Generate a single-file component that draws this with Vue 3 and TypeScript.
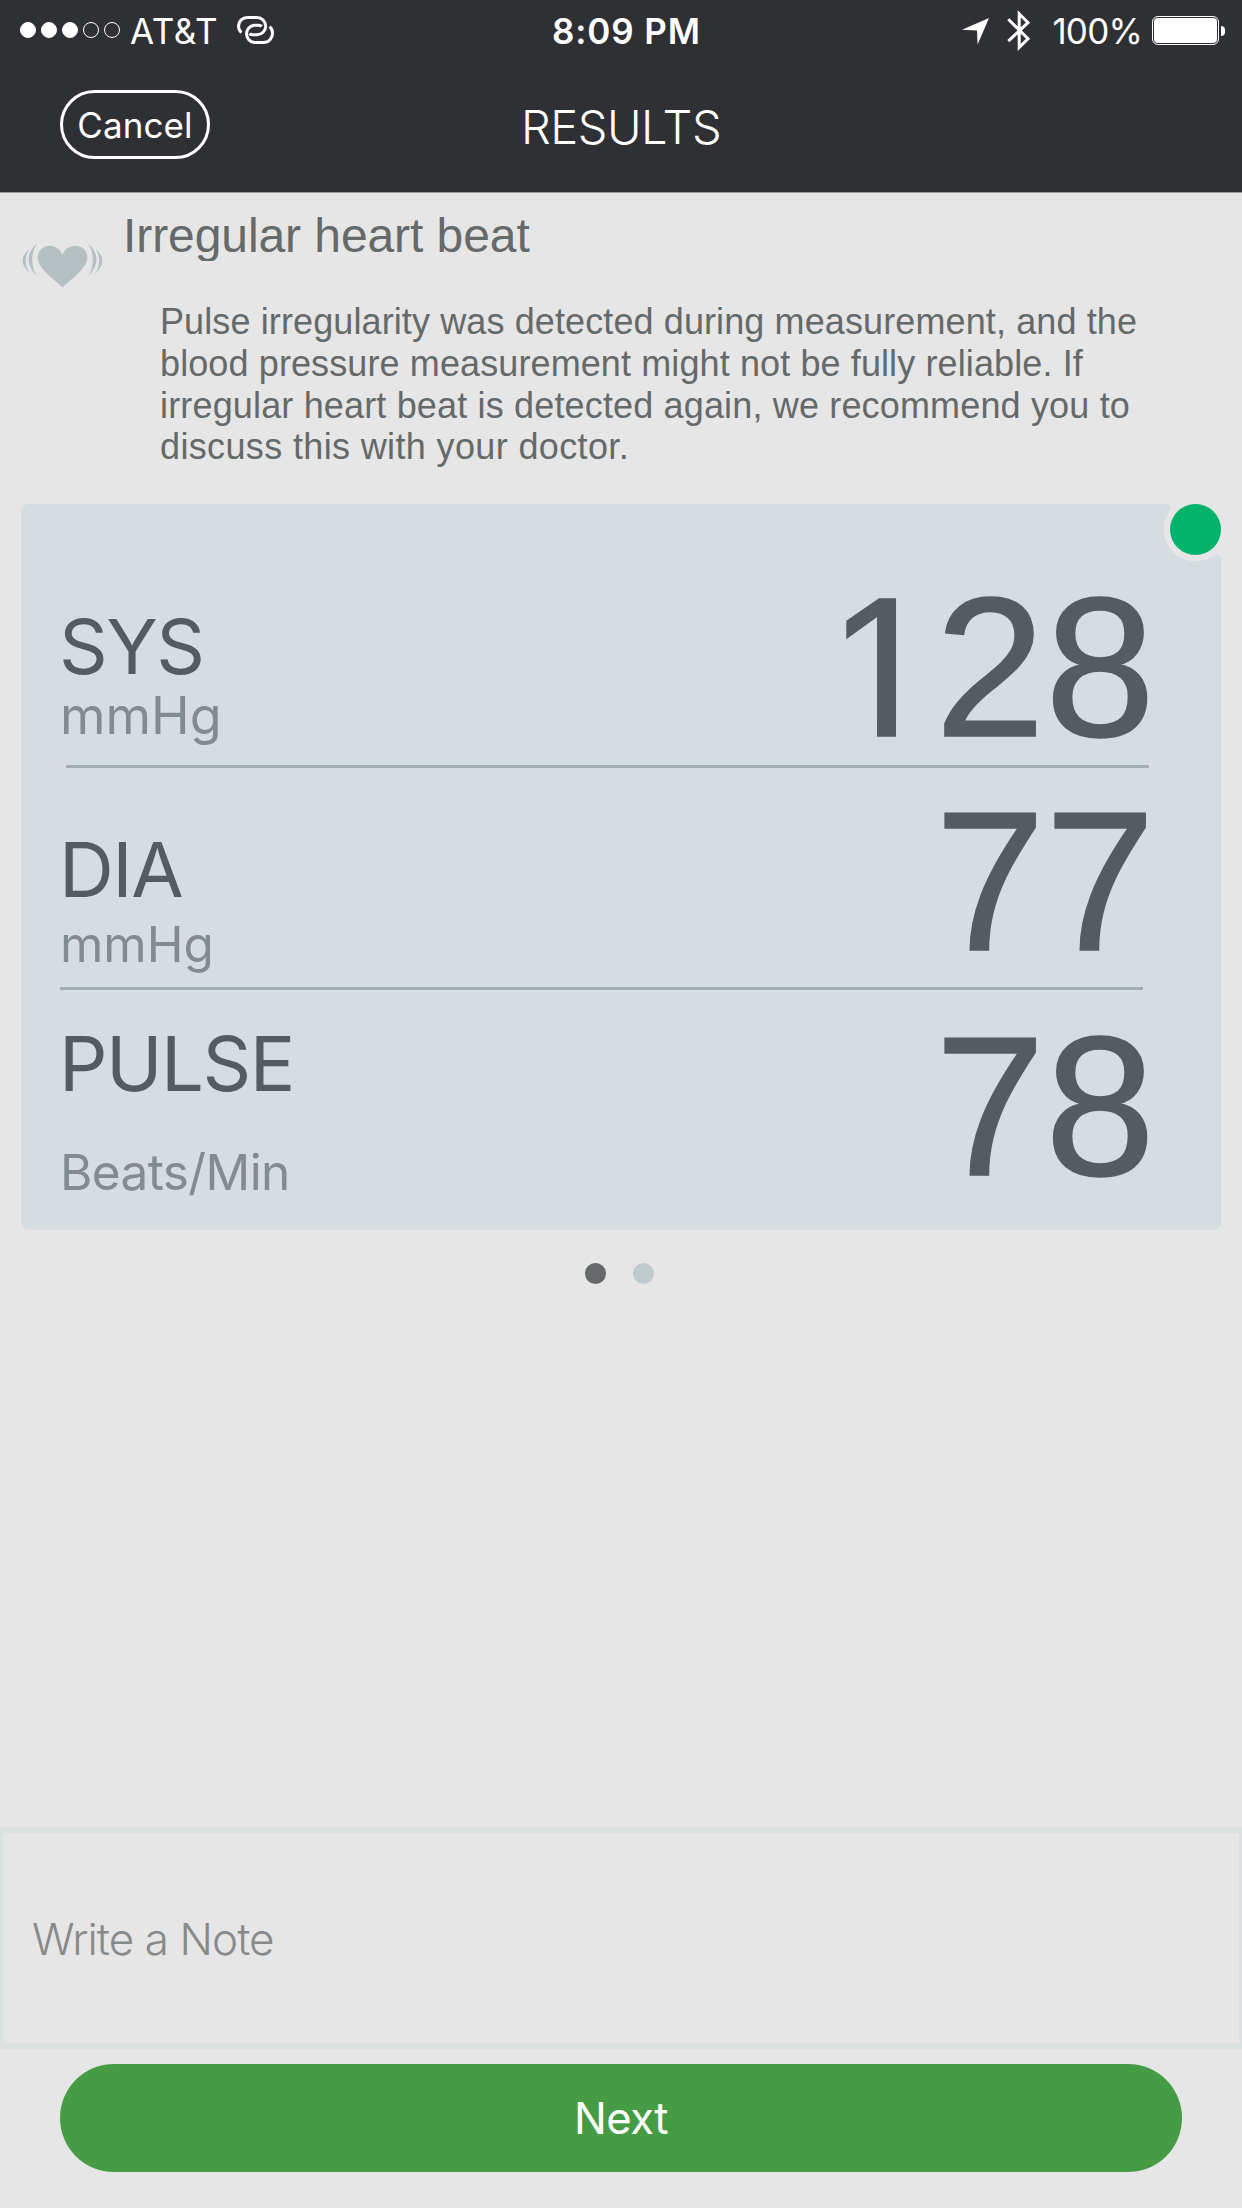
<script setup lang="ts">
interface Reading {
  id: string
  label: string
  unit: string
  digits: string[]
}

const readings: Reading[] = [
  { id: 'sys', label: 'SYS', unit: 'mmHg', digits: ['1', '2', '8'] },
  { id: 'dia', label: 'DIA', unit: 'mmHg', digits: ['7', '7'] },
  { id: 'pulse', label: 'PULSE', unit: 'Beats/Min', digits: ['7', '8'] },
]
const signal: boolean[] = [true, true, true, false, false]
const message: string[] = [
  'Pulse irregularity was detected during measurement, and the',
  'blood pressure measurement might not be fully reliable. If',
  'irregular heart beat is detected again, we recommend you to',
  'discuss this with your doctor.',
]
</script>

<template>
  <div class="screen">
    <header class="header">
      <div class="status">
        <div class="carrier">
          <span class="signal">
            <i v-for="(on, i) in signal" :key="i" class="bar" :class="{ on }"></i>
          </span>
          <span class="network">AT&amp;T</span>
          <svg class="link" width="38" height="30" viewBox="0 0 38 30" fill="none" stroke="#fff" stroke-width="3">
            <path d="M4.400 17.600C2.500 16 1.500 13.700 1.500 11.100A8.900 8.900 0 0 1 10.400 2.400H20A8.700 8.700 0 0 1 20 19.800H15.500C14 19.800 13.200 19.300 12.600 18.500" />
            <path d="M32.600 11.600C34.500 13.200 35.500 15.400 35.500 18A9 9 0 0 1 26.500 27.500H17.300A8.700 8.700 0 0 1 17.300 10.200H21.800C23.300 10.200 24.100 10.700 24.700 11.500" />
          </svg>
        </div>
        <div class="time">8:09 PM</div>
        <div class="system">
          <svg class="arrow" width="28" height="28" viewBox="0 0 28 28"><path d="M27 1 15.600 27.600 15 13.400 0 12.700Z" fill="#fff" /></svg>
          <svg class="bluetooth" width="24" height="42" viewBox="0 0 24 42" fill="none" stroke="#fff" stroke-width="3">
            <path d="M1.300 9.200 21 28.700 12.200 37.500V3.800L21 12.600 1.300 31.200" />
          </svg>
          <span class="percent">100%</span>
          <span class="battery"><i class="charge"></i></span>
          <i class="nub"></i>
        </div>
      </div>
      <div class="nav">
        <button class="cancel">Cancel</button>
        <h1 class="title">RESULTS</h1>
      </div>
    </header>

    <section class="notice">
      <svg class="heart" width="81" height="46" viewBox="0 0 80 46" preserveAspectRatio="none">
        <path fill="#b5c0c3" d="M40 45.500C33 38 15.500 27 15.500 15.500C15.500 8.500 21 3.800 27.500 3.800C33.500 3.800 38 7.500 40 13C42 7.500 46.500 3.800 52.500 3.800C59 3.800 64.500 8.500 64.500 15.500C64.500 27 47 38 40 45.500Z" />
        <path fill="#b5c0c3" d="M14.500 1.500Q-1.500 17 14.500 34Q5.500 18 14.500 1.500ZM7.200 7Q-6 18 7.200 31Q0 19 7.200 7ZM65.500 1.500Q81.500 17 65.500 34Q74.500 18 65.500 1.500ZM72.800 7Q86 18 72.800 31Q80 19 72.800 7Z" />
      </svg>
      <div class="message">
        <h2 class="heading">Irregular heart beat</h2>
        <p class="text">
          <span v-for="line in message" :key="line" class="line">{{ line }}</span>
        </p>
      </div>
    </section>

    <section class="card">
      <div v-for="r in readings" :key="r.id" class="row" :class="r.id">
        <div class="name">
          <div class="label">{{ r.label }}</div>
          <div class="unit">{{ r.unit }}</div>
        </div>
        <div class="value"><span v-for="(d, i) in r.digits" :key="i" class="digit" :class="{ one: d === '1' }">{{ d }}</span></div>
      </div>
      <svg class="badge" width="58" height="58" viewBox="0 0 58 58">
        <path d="M4.500 0Q9 2 6.500 9A32 32 0 0 0 49 51.500Q56 49 58 53.500V0Z" fill="#e6e6e6" />
        <circle cx="32.500" cy="25.500" r="32" fill="#e6e6e6" />
        <circle cx="32.500" cy="25.500" r="25.500" fill="#03b36b" />
      </svg>
    </section>

    <div class="pager"><i class="page current"></i><i class="page"></i></div>

    <div class="note">Write a Note</div>
    <button class="next">Next</button>
  </div>
</template>

<style>
body {
  background: #e6e6e6;
}
</style>

<style scoped>
.screen {
  width: 1242px;
  height: 2208px;
  display: flex;
  flex-direction: column;
  overflow: hidden;
  background: #e6e6e6;
  font-family: Inter, "Liberation Sans", sans-serif;
}
h1,
h2,
p {
  margin: 0;
  font-weight: 400;
}
svg,
i {
  display: block;
  flex: none;
}
button {
  box-sizing: border-box;
  padding: 0;
  font-family: inherit;
  color: #fff;
}
.header {
  flex: none;
  height: 192px;
  background: #2f3034;
  color: #fff;
  border-bottom: 1px solid #a09b9c;
}
.status {
  height: 62px;
  display: grid;
  grid-template-columns: 1fr auto 1fr;
  font-size: 35px;
  line-height: 62px;
  white-space: nowrap;
}
.carrier {
  display: flex;
  padding-left: 20px;
}
.signal {
  display: flex;
  gap: 5px;
  padding-top: 22px;
}
.bar {
  box-sizing: border-box;
  width: 16px;
  height: 16px;
  border: 1px solid #fff;
  border-radius: 50%;
}
.bar.on {
  background: #fff;
}
.network {
  width: 107px;
  padding-left: 10px;
  letter-spacing: 0.6px;
}
.link {
  margin-top: 15px;
}
.time {
  font-weight: 600;
  letter-spacing: 0.9px;
  padding-left: 11px;
}
.system {
  display: flex;
  justify-content: flex-end;
  padding-right: 17px;
}
.arrow {
  margin-top: 17px;
}
.bluetooth {
  margin: 10px 0 0 17px;
}
.percent {
  margin: 0 10px 0 21px;
  letter-spacing: -0.8px;
}
.battery {
  box-sizing: border-box;
  width: 67px;
  height: 29px;
  margin-top: 16px;
  padding: 1px;
  border: 1px solid #fff;
  border-radius: 6px;
}
.charge {
  height: 25px;
  border-radius: 4px;
  background: #fff;
}
.nub {
  width: 4px;
  height: 10px;
  margin: 26px 0 0 2px;
  border-radius: 0 4px 4px 0;
  background: #fff;
}
.nav {
  height: 130px;
  display: grid;
  grid-template-columns: 1fr auto 1fr;
}
.cancel {
  width: 150px;
  height: 69px;
  margin: 28px 0 0 60px;
  border: 3px solid #fff;
  border-radius: 35px;
  background: none;
  font-size: 35px;
  letter-spacing: 0.1px;
}
.title {
  font-size: 47px;
  line-height: 130px;
  font-weight: 300;
  letter-spacing: -0.5px;
}
.notice {
  flex: none;
  height: 311px;
  display: flex;
  font-family: "Liberation Sans", Arial, sans-serif;
  color: #656969;
}
.heart {
  margin: 49px 0 0 22px;
}
.message {
  padding: 15px 0 0 20px;
  white-space: nowrap;
}
.heading {
  height: 53px;
  overflow: hidden;
  font-size: 48px;
  line-height: 56px;
  letter-spacing: -0.08px;
}
.text {
  margin: 40px 0 0 37px;
  font-size: 36px;
  line-height: 41.8px;
  letter-spacing: 0.11px;
}
.line {
  display: block;
}
.line:nth-child(3) {
  letter-spacing: 0.16px;
}
.line:nth-child(4) {
  letter-spacing: 0.36px;
}
.card {
  position: relative;
  flex: none;
  height: 726px;
  margin: 0 21px;
  border-radius: 8px;
  background: #d5dde0;
}
.row {
  position: relative;
  display: flex;
  justify-content: space-between;
  padding: 0 66px 0 38px;
}
.sys {
  height: 264px;
}
.dia {
  height: 222px;
}
.sys::after,
.dia::after {
  content: "";
  position: absolute;
  left: 45px;
  bottom: 0;
  width: 1083px;
  height: 3px;
  background: #a3aeb0;
}
.dia::after {
  left: 39px;
}
.label {
  color: #555c61;
  font-size: 76px;
  line-height: 80px;
  letter-spacing: -1.5px;
}
.unit {
  padding-left: 1px;
  color: #828b8e;
  font-size: 49.500px;
  line-height: 60px;
}
.sys .name {
  padding-top: 102px;
}
.sys .unit {
  font-size: 52px;
}
.dia .name {
  padding-top: 61px;
}
.dia .unit {
  margin-top: 5px;
}
.pulse .name {
  padding-top: 33px;
}
.pulse .unit {
  margin-top: 39px;
  letter-spacing: -0.6px;
}
.value {
  display: flex;
  font-family: "Liberation Sans", Arial, sans-serif;
  font-size: 198px;
  line-height: 200px;
  color: #555c61;
  -webkit-text-stroke: 1.5px #555c61;
}
.digit {
  width: 110px;
}
/* The footless "1": its baseline bar is cut away on both sides of the stem. */
.one {
  margin-right: -3px;
  clip-path: polygon(0 0, 100% 0, 100% 151px, 68px 151px, 68px 100%, 49px 100%, 49px 151px, 0 151px);
}
.sys .value {
  padding-top: 64px;
}
.dia .value {
  padding-top: 14px;
}
.pulse .value {
  padding-top: 17px;
}
.badge {
  position: absolute;
  top: 0;
  right: 0;
}
.pager {
  display: flex;
  gap: 27px;
  padding: 33px 0 0 585px;
}
.page {
  width: 21px;
  height: 21px;
  border-radius: 50%;
  background: #bfcacd;
}
.page.current {
  background: #656969;
}
.note {
  box-sizing: border-box;
  height: 222px;
  margin-top: auto;
  padding-left: 29px;
  border: solid #dbe0e1;
  border-width: 6px 3px;
  font-size: 44px;
  line-height: 212px;
  font-weight: 300;
  letter-spacing: -0.9px;
  color: #888a8a;
}
.next {
  flex: none;
  height: 108px;
  margin: 15px 60px 36px;
  border: 0;
  border-radius: 54px;
  background: #469c45;
  font-size: 43.500px;
  letter-spacing: -0.5px;
}
</style>
